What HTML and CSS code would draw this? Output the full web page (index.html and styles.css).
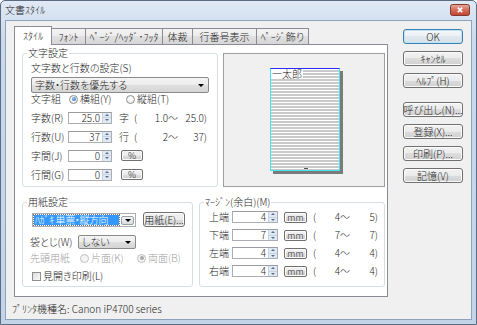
FILE: index.html
```html
<!DOCTYPE html>
<html lang="ja">
<head>
<meta charset="utf-8">
<title>文書スタイル</title>
<link rel="stylesheet" href="styles.css">
</head>
<body>
<div class="window">
  <div class="titlebar">
    <span class="title">文書ｽﾀｲﾙ</span>
    <span class="close"><svg width="20" height="12" viewBox="0 0 20 12"><defs><linearGradient id="cg" x1="0" y1="0" x2="0" y2="1"><stop offset="0" stop-color="#e9ab9d"/><stop offset="0.5" stop-color="#d36c5c"/><stop offset="1" stop-color="#c2412d"/></linearGradient></defs><rect x="0.5" y="0.5" width="19" height="11" rx="2" fill="url(#cg)" stroke="#7d3a2f"/><path d="M7.8 3.6 L12.2 8.2 M12.2 3.6 L7.8 8.2" stroke="#fff" stroke-width="1.6"/></svg></span>
  </div>
  <div class="client">
    <div class="main">
      <div class="tabs">
        <div class="tab active t1">ｽﾀｲﾙ</div>
        <div class="tab t2">ﾌｫﾝﾄ</div>
        <div class="tab t3">ﾍﾟｰｼﾞ/ﾍｯﾀﾞ･ﾌｯﾀ</div>
        <div class="tab t4">体裁</div>
        <div class="tab t5">行番号表示</div>
        <div class="tab t6">ﾍﾟｰｼﾞ飾り</div>
      </div>
      <div class="panel">
        <div class="row top">
          <div class="group g-moji">
            <span class="glabel">文字設定</span>
            <div class="line">文字数と行数の設定(S)</div>
            <div class="combo c-main"><span>字数・行数を優先する</span><span class="arrow"></span></div>
            <div class="line radios">
              <span class="rl">文字組</span>
              <span class="ritem w57"><span class="radio on"></span>横組(Y)</span>
              <span class="ritem"><span class="radio"></span>縦組(T)</span>
            </div>
            <div class="num-row first">
              <span class="nl">字数(R)</span>
              <span class="edit"><span class="val">25.0</span><span class="spin"><i class="up"></i><i class="dn"></i></span></span>
              <span class="unit">字</span><span class="paren">(</span><span class="rmin">1.0〜</span><span class="rmax">25.0)</span>
            </div>
            <div class="num-row">
              <span class="nl">行数(U)</span>
              <span class="edit"><span class="val">37</span><span class="spin"><i class="up"></i><i class="dn"></i></span></span>
              <span class="unit">行</span><span class="paren">(</span><span class="rmin">2〜</span><span class="rmax">37)</span>
            </div>
            <div class="num-row">
              <span class="nl">字間(J)</span>
              <span class="edit"><span class="val">0</span><span class="spin"><i class="up"></i><i class="dn"></i></span></span>
              <span class="btn small pct">%</span>
            </div>
            <div class="num-row">
              <span class="nl">行間(G)</span>
              <span class="edit"><span class="val">0</span><span class="spin"><i class="up"></i><i class="dn"></i></span></span>
              <span class="btn small pct">%</span>
            </div>
          </div>
          <div class="preview">
            <div class="paper">
              <span class="ptext">一太郎</span>
              <span class="pmark"></span>
            </div>
          </div>
        </div>
        <div class="row bottom">
          <div class="group g-paper">
            <span class="glabel">用紙設定</span>
            <div class="prow1">
              <div class="ecombo"><span class="sel">ﾊｶﾞｷ 単票・縦方向</span><span class="dbtn"><span class="arrow"></span></span></div>
              <span class="btn paperbtn">用紙(E)...</span>
            </div>
            <div class="prow2">
              <span class="pl">袋とじ(W)</span>
              <div class="combo c-small"><span>しない</span><span class="arrow"></span></div>
            </div>
            <div class="line prow3 disabled">
              <span class="pl3">先頭用紙</span>
              <span class="ritem w57"><span class="radio dis"></span>片面(K)</span>
              <span class="ritem"><span class="radio dis on"></span>両面(B)</span>
            </div>
            <div class="line prow4"><span class="check"></span>見開き印刷(L)</div>
          </div>
          <div class="group g-margin">
            <span class="glabel">ﾏｰｼﾞﾝ(余白)(M)</span>
            <div class="mrow">
              <span class="ml">上端</span>
              <span class="edit medit"><span class="val">4</span><span class="spin"><i class="up"></i><i class="dn"></i></span></span>
              <span class="btn small mm">mm</span><span class="mparen">(</span><span class="mmin">4〜</span><span class="mmax">5)</span>
            </div>
            <div class="mrow">
              <span class="ml">下端</span>
              <span class="edit medit"><span class="val">7</span><span class="spin"><i class="up"></i><i class="dn"></i></span></span>
              <span class="btn small mm">mm</span><span class="mparen">(</span><span class="mmin">7〜</span><span class="mmax">7)</span>
            </div>
            <div class="mrow">
              <span class="ml">左端</span>
              <span class="edit medit"><span class="val">4</span><span class="spin"><i class="up"></i><i class="dn"></i></span></span>
              <span class="btn small mm">mm</span><span class="mparen">(</span><span class="mmin">4〜</span><span class="mmax">4)</span>
            </div>
            <div class="mrow">
              <span class="ml">右端</span>
              <span class="edit medit"><span class="val">4</span><span class="spin"><i class="up"></i><i class="dn"></i></span></span>
              <span class="btn small mm">mm</span><span class="mparen">(</span><span class="mmin">4〜</span><span class="mmax">4)</span>
            </div>
          </div>
        </div>
      </div>
      <div class="printer">ﾌﾟﾘﾝﾀ機種名: Canon iP4700 series</div>
    </div>
    <div class="buttons">
      <span class="btn big default">OK</span>
      <span class="btn big">ｷｬﾝｾﾙ</span>
      <span class="btn big">ﾍﾙﾌﾟ(H)</span>
      <span class="btn big sep">呼び出し(N)...</span>
      <span class="btn big">登録(X)...</span>
      <span class="btn big">印刷(P)...</span>
      <span class="btn big">記憶(V)</span>
    </div>
  </div>
</div>
</body>
</html>
```

FILE: styles.css
```css
* { box-sizing: border-box; }
html, body { margin: 0; padding: 0; }
body {
  width: 477px; height: 325px; overflow: hidden;
  font-family: "Noto Sans CJK JP", "Noto Sans", sans-serif;
  font-size: 10px; line-height: 12px; color: #1e1e1e;
  font-weight: 300;
  font-feature-settings: "palt";
  background: #fff;
}
.window {
  width: 477px; height: 325px;
  border: 1px solid #5b6b80;
  border-radius: 5px 5px 0 0;
  background: linear-gradient(#e0e9f5, #cad9ec 40px, #c3d4ea);
  padding: 0 4px 4px;
  display: flex; flex-direction: column;
}
.titlebar { height: 19px; display: flex; align-items: flex-start; justify-content: space-between; }
.title { padding: 3px 0 0 0; line-height: 12px; }
.close { margin: 3px 2px 0 0; height: 12px; display: block; }
.close svg { display: block; }

.client {
  flex: 1; display: flex;
  background: #f0f0f0;
  border: 1px solid #8da2bd;
}
.main { width: 382px; padding-left: 6px; display: flex; flex-direction: column; }

.tabs { display: flex; height: 18px; margin: 5px 0 0 2px; position: relative; z-index: 1; }
.tab {
  height: 16px; margin-top: 2px;
  border: 1px solid #898c95; border-bottom: 0; border-left: 0;
  background: linear-gradient(#f3f3f3, #ececec 50%, #e0e0e0 50%, #d6d6d6);
  text-align: center; line-height: 15px;
}
.tab.active { height: 19px; margin-top: 0; background: #fff; border-left: 1px solid #898c95; line-height: 18px; }
.t1 { width: 38px; } .t2 { width: 34px; } .t3 { width: 77px; }
.t4 { width: 30px; } .t5 { width: 64px; } .t6 { width: 52px; }

.panel {
  width: 374px; height: 253px; margin-left: 2px;
  border: 1px solid #898c95; background: #fff;
  display: flex; flex-direction: column;
  padding: 8px 2px 0 7px;
}
.row { display: flex; }
.row.top { gap: 5px; height: 134px; }
.row.bottom { gap: 6px; margin-top: 15px; height: 85px; }

.group { position: relative; border: 1px solid #d5dfe5; border-radius: 3px; }
.glabel { position: absolute; top: -7px; left: 4px; padding: 0 1px; background: #fff; line-height: 12px; white-space: nowrap; }
.line { height: 12px; display: flex; align-items: center; white-space: nowrap; }

.g-moji { width: 196px; padding: 8px 0 0 8px; }
.combo {
  display: flex; align-items: center; justify-content: space-between;
  border: 1px solid #8a8a8a; border-radius: 2px;
  background: linear-gradient(#f4f4f4, #ececec 50%, #dfdfdf 50%, #d5d5d5);
  padding: 0 4px 0 3px; line-height: 12px;
}
.c-main { width: 178px; height: 16px; margin-top: 3px; }
.arrow { width: 0; height: 0; border-left: 3px solid transparent; border-right: 3px solid transparent; border-top: 3px solid #000; }

.radios .rl { width: 38px; }
.ritem { display: flex; align-items: center; }
.w57 { width: 57px; }
.radio {
  width: 9px; height: 9px; border-radius: 50%;
  border: 1px solid #8e8f8f;
  background: radial-gradient(circle at 50% 40%, #fff, #e6e6e6);
  margin-right: 2px; position: relative;
}
.radio.on::after {
  content: ""; position: absolute; left: 1.5px; top: 1.5px; width: 4px; height: 4px; border-radius: 50%;
  background: radial-gradient(circle at 40% 35%, #8fc6f5, #1c5fb5);
}
.radio.dis { border-color: #c0c0c0; background: #f4f4f4; }
.radio.dis.on::after { background: #a8a8a8; }

.num-row { height: 19px; display: flex; align-items: center; white-space: nowrap; }
.num-row.first { margin-top: 3px; }
.nl { width: 37px; }
.edit {
  display: flex; width: 44px; height: 12px;
  border: 1px solid #abadb3; border-top-color: #9a9ca2;
  background: #fff;
}
.val { flex: 1; text-align: right; padding-right: 2px; line-height: 10px; }
.spin { width: 9px; display: flex; flex-direction: column; background: #dfe8f3; border-left: 1px solid #c8d3e0; }
.spin i { flex: 1; display: flex; align-items: center; justify-content: center; }
.spin i::after { content: ""; width: 0; height: 0; border-left: 2px solid transparent; border-right: 2px solid transparent; }
.spin .up::after { border-bottom: 2px solid #5a6f8c; }
.spin .dn { border-top: 1px solid #c8d3e0; }
.spin .dn::after { border-top: 2px solid #5a6f8c; }
.unit { margin-left: 7px; width: 15px; }
.paren { width: 4px; }
.rmin { width: 40px; text-align: right; }
.rmax { width: 29px; text-align: right; }

.btn {
  display: flex; align-items: center; justify-content: center;
  border: 1px solid #707070; border-radius: 3px;
  background: linear-gradient(#f2f2f2, #ebebeb 50%, #dddddd 50%, #cfcfcf);
  box-shadow: inset 0 0 0 1px #fbfbfb;
  white-space: nowrap;
}
.small { height: 11px; line-height: 9px; font-size: 9px; border-radius: 2px; }
.pct { margin-left: 9px; width: 22px; }

.preview {
  width: 162px; height: 134px;
  border: 1px solid #a0a0a0;
  background: #f0f0f0;
  padding: 14px 0 0 46px;
}
.paper {
  position: relative;
  width: 70px; height: 103px;
  border-top: 1px solid #2a2aff;
  border-left: 1px solid #3fe3f2; border-right: 1px solid #3fe3f2; border-bottom: 1px solid #3fe3f2;
  background: repeating-linear-gradient(#fff 0 1px, #c9c9c9 1px 3px) #fff;
  background-origin: content-box;
  box-shadow: 3px 3px 0 #7b7b7b;
}
.ptext { display: inline-block; background: #fff; line-height: 10px; font-size: 10px; padding: 0 1px 0 1px; vertical-align: top; }
.pmark { position: absolute; left: 33px; bottom: 1px; width: 4px; height: 1px; background: #555; }

.g-paper { width: 171px; padding: 9px 0 0 7px; }
.prow1 { display: flex; height: 15px; margin-left: 2px; }
.ecombo {
  width: 104px; height: 14px; margin-top: 1px;
  border: 1px solid #abadb3; background: #fff;
  display: flex; align-items: center; padding: 1px;
}
.sel {
  flex: 1; margin-right: 2px; height: 10px; line-height: 10px; font-size: 10px;
  background: #3399ff; color: #fff; padding-left: 1px; outline: 1px dotted #777;
  white-space: nowrap; letter-spacing: -0.4px;
}
.dbtn {
  width: 13px; height: 9px;
  border: 1px solid #9aa0a8; border-radius: 2px;
  background: linear-gradient(#f2f2f2, #dcdcdc);
  display: flex; align-items: center; justify-content: center;
}
.paperbtn { margin-left: 7px; width: 42px; height: 15px; }
.prow2 { display: flex; align-items: center; height: 14px; margin-top: 8px; }
.pl { width: 48px; }
.c-small { width: 58px; height: 14px; }
.prow3 { margin-top: 3px; }
.disabled { color: #a0a0a0; }
.pl3 { width: 50px; }
.prow4 { margin: 6px 0 0 2px; }
.check {
  width: 9px; height: 9px; margin-right: 2px;
  border: 1px solid #8e8f8f;
  background: linear-gradient(135deg, #dcdcdc, #fbfbfb);
}

.g-margin { width: 186px; padding: 5px 0 0 9px; }
.mrow { height: 18px; display: flex; align-items: center; white-space: nowrap; }
.ml { width: 23px; }
.medit { width: 46px; }
.mm { margin-left: 6px; width: 23px; }
.mparen { margin-left: 6px; width: 3px; }
.mmin { width: 34px; text-align: right; }
.mmax { width: 28px; text-align: right; }

.printer { margin-top: 6px; line-height: 12px; white-space: nowrap; }

.buttons { margin-left: 15px; padding-top: 8px; width: 60px; display: flex; flex-direction: column; gap: 7px; }
.big { height: 15px; line-height: 13px; }
.big.sep { margin-top: 7px; }
.default {
  border-color: #3c7fb1;
  box-shadow: inset 0 0 0 1px #bfe4f8;
  background: linear-gradient(#f3f7fa, #ecf1f5 50%, #e1e8ee 50%, #d8e1e8);
}
```
